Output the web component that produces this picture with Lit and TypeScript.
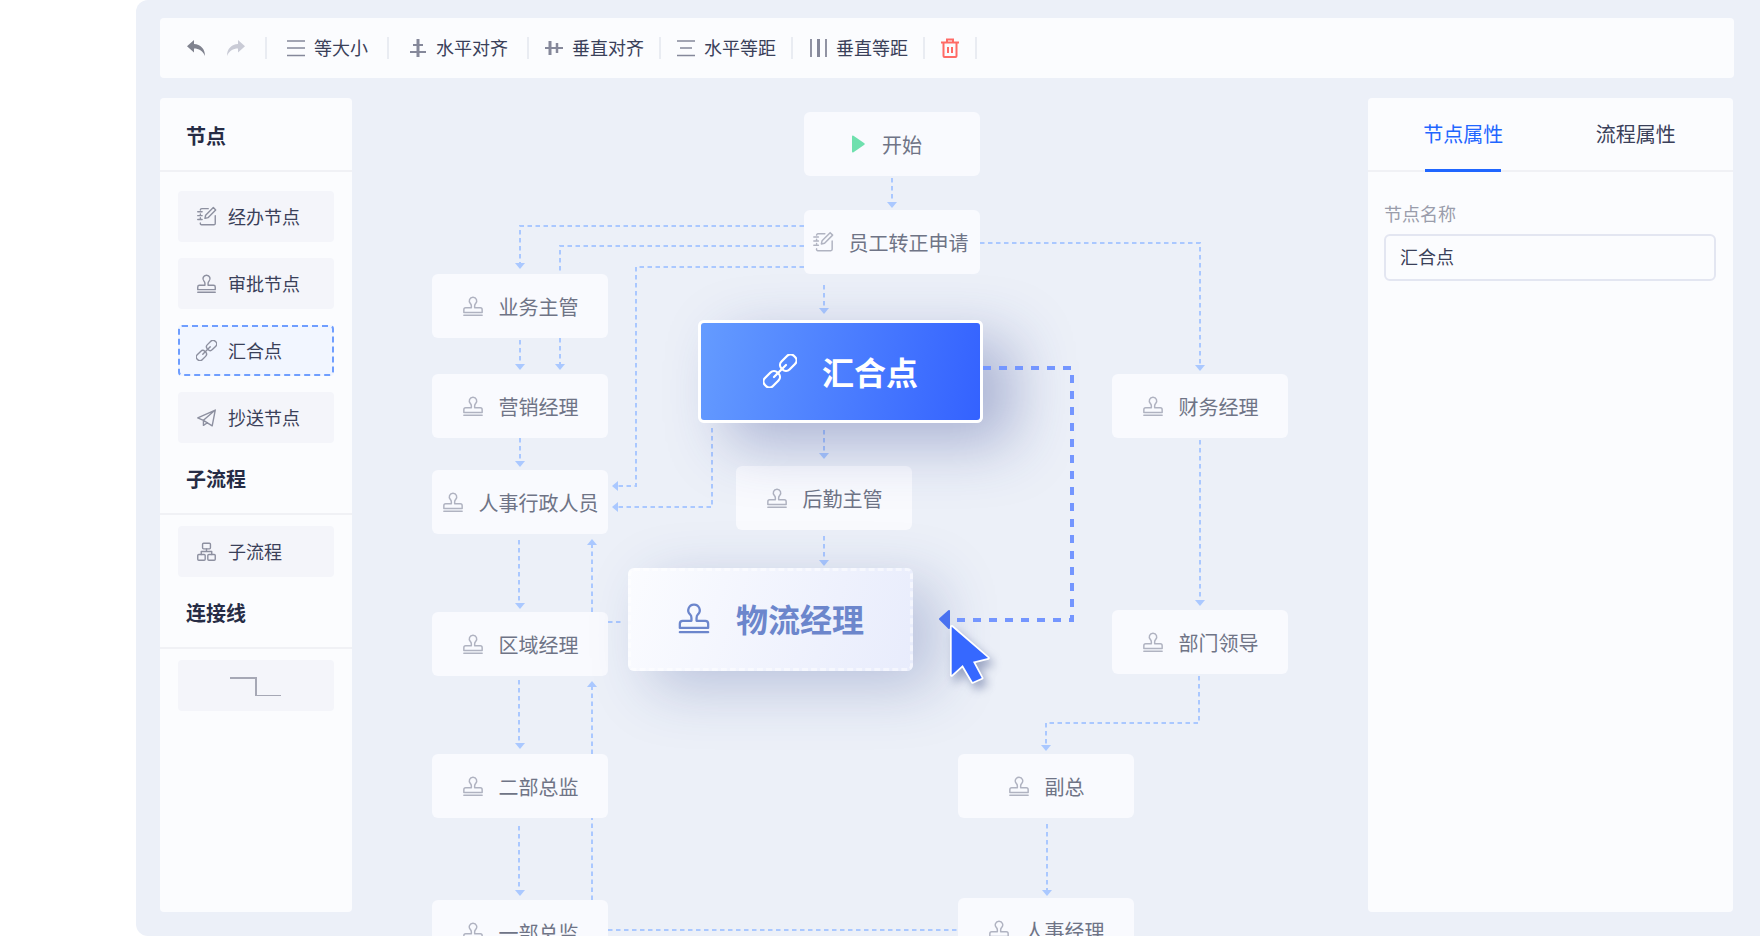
import { LitElement, html, css, svg } from "lit";
import { customElement } from "lit/decorators.js";

const stroke = (inner: unknown) => html`<svg class="ic" viewBox="0 0 24 24" fill="none" stroke="currentColor" stroke-width="1.600" stroke-linecap="round" stroke-linejoin="round">${inner}</svg>`;

const stampPaths = svg`<path d="M12 2.500a4 4 0 0 1 2.800 6.900c-.8.800-1 1.400-1 2.600V14H20a2 2 0 0 1 2 2v3H2v-3a2 2 0 0 1 2-2h6.200v-2c0-1.200-.2-1.800-1-2.600A4 4 0 0 1 12 2.500z"/><path d="M2 22h20"/>`;
const editPaths = svg`<path d="M14 3H6.500A1.500 1.500 0 0 0 5 4.500M5 9v1M5 13.500v1M5 19.500A1.500 1.500 0 0 0 6.500 21.500h14a1.500 1.500 0 0 0 1.500-1.500v-9"/><path d="M2 6.500h5M2 11h5M2 15.500h5"/><path d="M19.800 1.800l2.700 2.700-8.800 8.800-3.500.8.800-3.500z"/>`;
const linkPaths = svg`<g transform="rotate(-45 12 12)"><rect x="-2.500" y="8" width="12.500" height="8" rx="3.500"/><rect x="14" y="8" width="12.500" height="8" rx="3.500"/><path d="M6 12h12"/></g>`;
const planePaths = svg`<path d="M22 3.500L2 12.500l6.500 2.700L22 3.500zM22 3.500l-3.500 18-10-6.300v5.800l4.500-3"/>`;
const flowPaths = svg`<rect x="7.500" y="2.500" width="9" height="6.500" rx="1.200"/><rect x="2" y="15.500" width="8.500" height="6.500" rx="1.200"/><rect x="13.500" y="15.500" width="8.500" height="6.500" rx="1.200"/><path d="M12 9v3M6 15.500V12h12v3.500"/>`;

const icons: Record<string, unknown> = { stamp: stampPaths, edit: editPaths, link: linkPaths, plane: planePaths, flow: flowPaths };

const nodes = [
  { t: "开始", x: 804, y: 112, i: "play", pr: 11, gap: 17 },
  { t: "员工转正申请", x: 804, y: 210, i: "edit", pr: 4, gap: 15 },
  { t: "业务主管", x: 432, y: 274, i: "stamp", pr: 0, gap: 15 },
  { t: "营销经理", x: 432, y: 374, i: "stamp", pr: 0, gap: 15 },
  { t: "人事行政人员", x: 432, y: 470, i: "stamp", pr: 0, gap: 15 },
  { t: "区域经理", x: 432, y: 612, i: "stamp", pr: 0, gap: 15 },
  { t: "二部总监", x: 432, y: 754, i: "stamp", pr: 0, gap: 15 },
  { t: "一部总监", x: 432, y: 900, i: "stamp", pr: 0, gap: 15 },
  { t: "后勤主管", x: 736, y: 466, i: "stamp", pr: 0, gap: 15 },
  { t: "财务经理", x: 1112, y: 374, i: "stamp", pr: 0, gap: 15 },
  { t: "部门领导", x: 1112, y: 610, i: "stamp", pr: 0, gap: 15 },
  { t: "副总", x: 958, y: 754, i: "stamp", pr: 0, gap: 15 },
  { t: "人事经理", x: 958, y: 898, i: "stamp", pr: 0, gap: 15 },
];

const lines: [string, string | null, number, number][] = [
  ["M892 178V203", "d", 892, 208],
  ["M804 226H520V263", "d", 520, 269],
  ["M804 246H560V364", "d", 560, 370],
  ["M804 267H636V486H618", "l", 612, 486],
  ["M824 285V308", "d", 824, 314],
  ["M980 243H1200V365", "d", 1200, 371],
  ["M520 340V364", "d", 520, 370],
  ["M520 438V461", "d", 520, 467],
  ["M519 540V603", "d", 520, 609],
  ["M519 680V743", "d", 520, 749],
  ["M519 826V890", "d", 520, 896],
  ["M592 612V545", "u", 592, 539],
  ["M592 754V687", "u", 592, 681],
  ["M592 900V818", null, 0, 0],
  ["M608 622H624", null, 0, 0],
  ["M608 930H958", null, 0, 0],
  ["M712 428V507H618", "l", 612, 507],
  ["M824 430V453", "d", 824, 459],
  ["M824 536V560", "d", 824, 566],
  ["M1200 440V600", "d", 1200, 606],
  ["M1199 676V723H1046V745", "d", 1046, 751],
  ["M1047 824V890", "d", 1047, 896],
];

const arrow = (d: string | null, x: number, y: number) => {
  if (d === "d") return svg`<path class="ah" d="M${x} ${y}l-5-6h10z"/>`;
  if (d === "u") return svg`<path class="ah" d="M${x} ${y}l-5 6h10z"/>`;
  if (d === "l") return svg`<path class="ah" d="M${x} ${y}l6-5v10z"/>`;
  return svg``;
};

@customElement("app-root")
export class AppRoot extends LitElement {
  static styles = css`
    :host {
      display: block;
      width: 1760px;
      height: 936px;
      overflow: hidden;
      background: #fff;
      font-family: "Noto Sans CJK SC", "Noto Sans", sans-serif;
      font-size: 18px;
      color: #3a4059;
    }
    .main {
      margin-left: 136px;
      height: 936px;
      box-sizing: border-box;
      padding: 18px 26px 24px 24px;
      background: #ecf0f8;
      border-radius: 12px 0 0 12px;
      display: flex;
      flex-direction: column;
      gap: 20px;
      overflow: hidden;
    }
    .toolbar {
      flex: none;
      height: 60px;
      background: #fbfcfe;
      border-radius: 4px;
      display: flex;
      align-items: center;
      padding-left: 27px;
    }
    .sep { width: 2px; height: 22px; background: #e9ecf2; flex: none; }
    .tool { display: flex; align-items: center; gap: 9px; padding: 0 15px 2px 16px; line-height: 24px; }
    .tool.wide { padding: 0 19px 2px 20px; }
    .tool svg { width: 18px; height: 20px; flex: none; color: #85889a; display: block; position: relative; top: 1px; }
    .hist { display: flex; gap: 22px; padding-right: 20px; }
    .hist svg { width: 18px; height: 16px; display: block; }
    .trash { padding: 0 16px; }
    .trash svg { width: 18px; height: 20px; display: block; color: #ff6b66; }

    .body { flex: 1; display: flex; min-height: 0; }
    .panel { background: #fbfcfe; border-radius: 4px; }
    .left { width: 192px; flex: none; display: flex; flex-direction: column; }
    .head {
      font-size: 20px;
      font-weight: 700;
      color: #262c45;
      padding-left: 26px;
      height: 74px;
      line-height: 76px;
      box-sizing: border-box;
      border-bottom: 2px solid #f0f1f5;
    }
    .head.sub { height: 72px; line-height: 72px; }
    .list { display: flex; flex-direction: column; gap: 16px; padding: 19px 18px 0; }
    .list.one { padding-top: 11px; }
    .item {
      height: 51px;
      box-sizing: border-box;
      background: #f4f5fa;
      border-radius: 4px;
      display: flex;
      align-items: center;
      gap: 11px;
      padding: 0 0 2px 18px;
    }
    .item .ic { width: 21px; height: 21px; color: #8d90a0; flex: none; position: relative; top: 1px; }
    .item.sel { background: #f2f6ff; border: 2px dashed #6f9eff; padding-left: 16px; }
    .conn { justify-content: center; padding: 0; }
    .conn svg { width: 52px; height: 20px; display: block; }

    .canvas { flex: 1; position: relative; min-width: 0; }
    .lines { position: absolute; left: 0; top: 0; width: 1016px; height: 838px; overflow: visible; pointer-events: none; }
    .lines path.l { fill: none; stroke: #aac8ff; stroke-width: 2; stroke-dasharray: 4.500 3.500; }
    .lines path.ah { fill: #aac8ff; }
    .lines path.thick { fill: none; stroke: #7496ff; stroke-width: 4; stroke-dasharray: 8 8; }
    .lines path.big-ah { fill: #4a72f0; stroke: #4a72f0; stroke-width: 2; stroke-linejoin: round; }
    .lines path.cursor {
      fill: #3668ff;
      stroke: #fff;
      stroke-width: 3.500;
      stroke-linejoin: round;
      paint-order: stroke;
      filter: drop-shadow(4px 6px 5px rgba(40, 60, 120, .4));
    }
    .node {
      position: absolute;
      width: 176px;
      height: 64px;
      box-sizing: border-box;
      background: #f9fafe;
      border-radius: 6px;
      display: flex;
      align-items: center;
      justify-content: center;
      font-size: 20px;
      color: #6f7486;
    }
    .node .ic { width: 22px; height: 22px; color: #b0b3c1; flex: none; }
    .node .play { width: 14px; height: 18px; display: block; flex: none; }
    .big {
      position: absolute;
      width: 285px;
      height: 103px;
      box-sizing: border-box;
      border-radius: 6px;
      display: flex;
      align-items: center;
      justify-content: center;
      font-size: 32px;
      font-weight: 700;
      background-origin: border-box;
    }
    .big .ic { width: 34px; height: 34px; flex: none; }
    .big.hub {
      left: 346px;
      top: 222px;
      gap: 25px;
      padding-bottom: 2px;
      color: #fff;
      border: 3px solid #fff;
      background-image: linear-gradient(100deg, #659cff 0%, #3361ff 100%);
      box-shadow: 30px 20px 60px rgba(40, 60, 140, .34);
    }
    .big.dest {
      left: 276px;
      top: 470px;
      gap: 25px;
      padding-bottom: 4px;
      color: #6c86cc;
      border: 3px dashed rgba(255, 255, 255, .5);
      background-image: linear-gradient(110deg, #fbfcff 0%, #e8ecfc 100%);
      box-shadow: 24px 16px 60px rgba(40, 60, 140, .26);
    }
    .big.dest .ic { color: #6c86cc; }

    .right { width: 365px; flex: none; margin-right: 1px; }
    .tabs {
      display: grid;
      grid-template-columns: 1fr 1fr;
      padding: 0 11px 0 9px;
      height: 74px;
      box-sizing: border-box;
      border-bottom: 2px solid #f0f1f5;
      font-size: 20px;
    }
    .tab { display: flex; justify-content: center; padding-top: 21px; line-height: 30px; position: relative; }
    .tab.on { color: #1f66ff; }
    .tab.on::after {
      content: "";
      position: absolute;
      bottom: -2px;
      left: 50%;
      margin-left: -38px;
      width: 76px;
      height: 3px;
      background: #1f66ff;
    }
    .form { padding: 28px 17px 0 16px; }
    .label { color: #9a9dab; line-height: 26px; margin-bottom: 8px; }
    .input {
      height: 47px;
      box-sizing: border-box;
      border: 2px solid #e3e6f1;
      border-radius: 6px;
      padding-left: 14px;
      line-height: 41px;
    }
  `;

  private ic(name: string) {
    return stroke(icons[name]);
  }

  render() {
    return html`
      <div class="main">
        <div class="toolbar">
          <div class="hist">
            <svg viewBox="0 0 18 16"><path fill="#80838f" d="M7 0L0 6.300l7 6.200V8.600c5 0 8.500 2.200 11 7.400 0-7.500-4.500-11.500-11-12z"/></svg>
            <svg viewBox="0 0 18 16"><path fill="#c9cbd6" d="M11 0l7 6.300-7 6.200V8.600c-5 0-8.500 2.200-11 7.400 0-7.500 4.500-11.500 11-12z"/></svg>
          </div>
          <div class="sep"></div>
          <div class="tool wide">
            <svg viewBox="0 0 18 20" fill="none" stroke="currentColor" stroke-width="1.500"><path d="M0 3h18M0 10h18M0 17.500h18"/></svg>
            <span>等大小</span>
          </div>
          <div class="sep"></div>
          <div class="tool wide">
            <svg viewBox="0 0 18 20" fill="none" stroke="currentColor"><path stroke-width="3" d="M9 1v18"/><path stroke-width="2" d="M4 7h10M1 14h16"/></svg>
            <span>水平对齐</span>
          </div>
          <div class="sep"></div>
          <div class="tool">
            <svg viewBox="0 0 18 20" fill="none" stroke="currentColor"><path stroke-width="2" d="M0 10h18"/><path stroke-width="3" d="M5 3v14"/><path stroke-width="2.500" d="M12 5v10"/></svg>
            <span>垂直对齐</span>
          </div>
          <div class="sep"></div>
          <div class="tool">
            <svg viewBox="0 0 18 20" fill="none" stroke="currentColor" stroke-width="1.500"><path d="M0 3h18M3 10h12M0 17.500h18"/></svg>
            <span>水平等距</span>
          </div>
          <div class="sep"></div>
          <div class="tool">
            <svg viewBox="0 0 18 20" fill="none" stroke="currentColor"><path stroke-width="1.800" d="M2 1v18"/><path stroke-width="3" d="M9.500 1v18"/><path stroke-width="1.800" d="M17 1v18"/></svg>
            <span>垂直等距</span>
          </div>
          <div class="sep"></div>
          <div class="trash">
            <svg viewBox="0 0 18 20" fill="none" stroke="currentColor" stroke-width="2"><path d="M0 4.500h18M6 4.500V1.500h6v3M2.500 4.500V18a1 1 0 0 0 1 1h11a1 1 0 0 0 1-1V4.500M7 9v6M11 9v6"/></svg>
          </div>
          <div class="sep"></div>
        </div>

        <div class="body">
          <div class="panel left">
            <div class="head">节点</div>
            <div class="list">
              <div class="item">${this.ic("edit")}<span>经办节点</span></div>
              <div class="item">${this.ic("stamp")}<span>审批节点</span></div>
              <div class="item sel">${this.ic("link")}<span>汇合点</span></div>
              <div class="item">${this.ic("plane")}<span>抄送节点</span></div>
            </div>
            <div class="head sub">子流程</div>
            <div class="list one"><div class="item">${this.ic("flow")}<span>子流程</span></div></div>
            <div class="head sub">连接线</div>
            <div class="list one">
              <div class="item conn">
                <svg viewBox="0 0 52 20" fill="none" stroke="#a6a8b5" stroke-width="2"><path d="M0 2h26v18h25"/></svg>
              </div>
            </div>
          </div>

          <div class="canvas">
            <svg class="lines" viewBox="352 98 1016 838">
              ${lines.map(([d, dir, x, y]) => svg`<path class="l" d="${d}"/>${arrow(dir, x, y)}`)}
            </svg>
            ${nodes.map(
              (n) => html`<div class="node" style="left:${n.x - 352}px;top:${n.y - 98}px;gap:${n.gap}px;padding-right:${n.pr}px">
                ${n.i === "play"
                  ? html`<svg class="play" viewBox="0 0 14 18"><path fill="#6fe0ae" d="M1 1.500v15a1 1 0 0 0 1.500.8L13 10a1.200 1.200 0 0 0 0-2L2.500.7A1 1 0 0 0 1 1.500z"/></svg>`
                  : this.ic(n.i)}
                <span>${n.t}</span>
              </div>`
            )}
            <div class="big dest">${this.ic("stamp")}<span>物流经理</span></div>
            <div class="big hub">${this.ic("link")}<span>汇合点</span></div>
            <svg class="lines" viewBox="352 98 1016 838">
              <path class="thick" d="M983 368H1072V620H954"/>
              <path class="big-ah" d="M940 619l9-8v17z"/>
              <path class="cursor" d="M951.700 626.700L988 658L973 661.700L981.700 678L972.700 682L962.700 665L951.700 675Z"/>
            </svg>
          </div>

          <div class="panel right">
            <div class="tabs">
              <div class="tab on">节点属性</div>
              <div class="tab">流程属性</div>
            </div>
            <div class="form">
              <div class="label">节点名称</div>
              <div class="input">汇合点</div>
            </div>
          </div>
        </div>
      </div>
    `;
  }
}
